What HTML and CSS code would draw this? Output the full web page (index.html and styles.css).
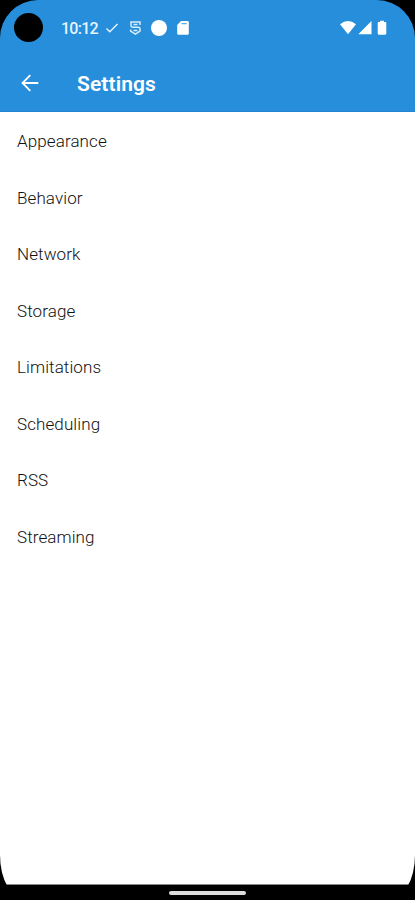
FILE: index.html
```html
<!DOCTYPE html>
<html lang="en">
<head>
  <meta charset="UTF-8">
  <meta name="viewport" content="width=device-width, initial-scale=1.0">
  <title>Settings</title>
  <link rel="stylesheet" href="styles.css">
</head>
<body>

<div class="screen">
  <header class="header">
    <div class="status-bar">
      <span class="camera"></span>
      <span class="clock">10:12</span>
      <div class="status-icons">
        <svg width="14" height="16" viewBox="0 0 14 16"><path d="M1.5 8.5l3.3 3.2 7.7-7.7" fill="none" stroke="#e6f4ff" stroke-width="1.4"/></svg>
        <svg width="14" height="16" viewBox="0 0 14 16"><path d="M12 5V2H3v3.8q0 1.4 1.6 1.4h5.6q1.8 0 1.8 1.6v2.4l-4.6 3-4.8-3V9.5M5.5 4.6h4M5.5 10.6h4" fill="none" stroke="#d9edfc" stroke-width="1.5"/></svg>
        <svg width="16" height="16" viewBox="0 0 16 16"><circle cx="8" cy="8" r="8" fill="#fff"/></svg>
        <svg width="14" height="16" viewBox="0 0 14 16"><path d="M5 1h6.5q1.3 0 1.3 1.3v11.2q0 1.3-1.3 1.3h-9q-1.3 0-1.3-1.3V5z" fill="#fff"/><path d="M5.6 3.6h5" stroke="#5aace6" stroke-width="1.3"/></svg>
      </div>
      <div class="system-icons">
        <svg width="16" height="16" viewBox="0 0 16 16"><path d="M0 4.2q8-6.2 16 0L8 14.3z" fill="#fff"/></svg>
        <svg width="14" height="16" viewBox="0 0 14 16"><path d="M13.5 1v13.3H.3z" fill="#fff"/></svg>
        <svg class="battery" width="10" height="16" viewBox="0 0 10 16"><path d="M3 .8h4V2h1.2q1.1 0 1.1 1.1v10.5q0 1.1-1.1 1.1H1.8q-1.1 0-1.1-1.1V3.1Q.7 2 1.8 2H3z" fill="#fff"/></svg>
      </div>
    </div>
    <div class="toolbar">
      <svg class="back" width="18" height="18" viewBox="0 0 18 18"><path d="M17.3 9H1.5M9.3 1.2L1.5 9l7.8 7.8" fill="none" stroke="#fff" stroke-width="1.8"/></svg>
      <h1>Settings</h1>
    </div>
  </header>

  <ul class="settings">
    <li>Appearance</li>
    <li>Behavior</li>
    <li>Network</li>
    <li>Storage</li>
    <li>Limitations</li>
    <li>Scheduling</li>
    <li>RSS</li>
    <li>Streaming</li>
  </ul>

  <div class="nav-bar"><span class="handle"></span></div>
</div>

</body>
</html>
```

FILE: styles.css
```css
* {
  box-sizing: border-box;
}

body {
  margin: 0;
  background: #000;
  font-family: Roboto, sans-serif;
}

svg {
  display: block;
}

.screen {
  display: flex;
  flex-direction: column;
  height: 900px;
  overflow: hidden;
  background: #000;
  border-radius: 38px 38px 26px 26px / 38px 38px 45px 45px;
}

.header {
  height: 112px;
  background: #268edb;
  border-bottom: 1px solid #2385cf;
  color: #fff;
}

.status-bar {
  display: flex;
  align-items: center;
  height: 56px;
  padding: 0 28px 0 14px;
}

.camera {
  width: 29px;
  height: 29px;
  margin-top: -2px;
  background: #000;
  border-radius: 50%;
}

.clock {
  width: 38px;
  margin-left: 18px;
  font-size: 16px;
  font-weight: 500;
  line-height: 20px;
  letter-spacing: -0.75px;
  padding-top: 1px;
  color: #e6f4ff;
}

.status-icons {
  display: flex;
  gap: 9px;
  margin-left: 6px;
}

.system-icons {
  display: flex;
  gap: 2px;
  margin-left: auto;
}

.battery {
  margin-left: 3px;
}

.toolbar {
  display: flex;
  align-items: center;
  height: 55px;
  padding-left: 21px;
}

.toolbar h1 {
  margin: 0 0 0 38px;
  font-size: 21px;
  font-weight: 600;
  letter-spacing: 0.1px;
}

.back {
  margin-top: -2px;
}

.settings {
  flex: 1;
  margin: 0;
  padding: 1px 17px 0;
  background: #fff;
  list-style: none;
}

.settings li {
  height: 56.57px;
  font-size: 17px;
  font-weight: 300;
  line-height: 56.57px;
  letter-spacing: 0.1px;
  color: #111;
}

.nav-bar {
  display: flex;
  justify-content: center;
  height: 16px;
  padding-top: 7px;
  background: #000;
  box-shadow: inset 0 1px #888;
}

.handle {
  width: 77px;
  height: 4px;
  background: #ddd;
  border-radius: 2px;
}
```
